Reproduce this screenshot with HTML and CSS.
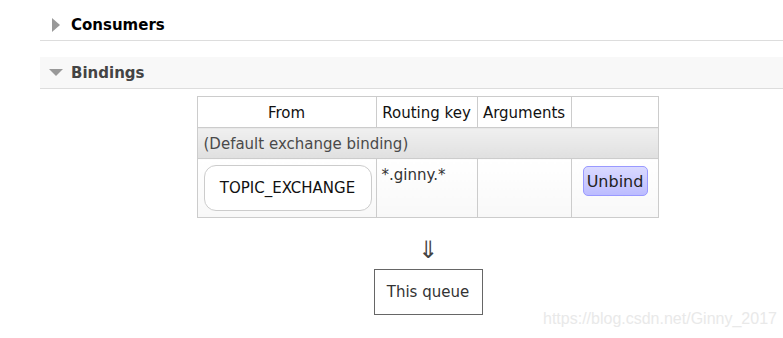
FILE: index.html
```html
<!DOCTYPE html>
<html lang="en">
<head>
    <meta charset="UTF-8">
    <title>Bindings</title>
    <link rel="stylesheet" href="styles.css">
</head>
<body>
    <div class="section">
        <h2 class="section-title collapsed"><span class="arrow"></span>Consumers</h2>
    </div>
    <div class="section">
        <h2 class="section-title open"><span class="arrow"></span>Bindings</h2>
        <div class="bindings">
            <table class="list">
                <thead>
                    <tr>
                        <th class="col-from">From</th>
                        <th class="col-key">Routing key</th>
                        <th class="col-args">Arguments</th>
                        <th class="col-act"></th>
                    </tr>
                </thead>
                <tbody>
                    <tr class="default-row">
                        <td colspan="4">(Default exchange binding)</td>
                    </tr>
                    <tr class="data-row">
                        <td><span class="exchange">TOPIC_EXCHANGE</span></td>
                        <td class="key">*.ginny.*</td>
                        <td></td>
                        <td class="act"><button class="unbind">Unbind</button></td>
                    </tr>
                </tbody>
            </table>
            <div class="down">&#8659;</div>
            <div class="queue">This queue</div>
        </div>
    </div>
    <div class="watermark">https://blog.csdn.net/Ginny_2017</div>
</body>
</html>
```

FILE: styles.css
```css
* {
    box-sizing: border-box;
    margin: 0;
    padding: 0;
}

body {
    font-family: 'DejaVu Sans', Verdana, sans-serif;
    font-size: 15px;
    color: #222;
    background: #fff;
    width: 783px;
    height: 338px;
    overflow: hidden;
    position: relative;
}

.section {
    margin-left: 40px;
}

.section-title {
    font-size: 15px;
    font-weight: bold;
    height: 32px;
    display: flex;
    align-items: center;
    padding-left: 9px;
    border-bottom: 1px solid #ddd;
    color: #000;
}

.section-title.collapsed {
    margin-top: 9px;
    margin-bottom: 16px;
    padding-left: 12px;
}

.section-title.open {
    background: #f8f8f8;
    color: #444;
}

.arrow {
    width: 0;
    height: 0;
}

.collapsed .arrow {
    border-top: 7px solid transparent;
    border-bottom: 7px solid transparent;
    border-left: 8px solid #999;
    margin-right: 11px;
}

.open .arrow {
    border-left: 7px solid transparent;
    border-right: 7px solid transparent;
    border-top: 7px solid #999;
    margin-right: 8px;
}

.bindings {
    display: flex;
    flex-direction: column;
    align-items: center;
    width: 461px;
    margin-left: 157px;
    padding-top: 7px;
}

.list {
    border-collapse: collapse;
    table-layout: fixed;
    width: 461px;
}

.list th,
.list td {
    border: 1px solid #ccc;
}

.list th {
    font-weight: normal;
    height: 31px;
    color: #111;
    padding: 1px 4px 0;
    white-space: nowrap;
}

.col-from { width: 179px; }
.col-key { width: 101px; }
.col-args { width: 94px; }
.col-act { width: 87px; }

.default-row td {
    height: 31px;
    padding: 1px 6px 0;
    color: #4a4a4a;
    background: linear-gradient(#f0f0f0, #e0e0e0);
    white-space: nowrap;
}

.data-row td {
    height: 59px;
    vertical-align: top;
    padding: 6px 5px;
    background: linear-gradient(#fff, #f8f8f8);
}

.data-row td:first-child {
    padding-left: 6px;
}

.data-row td.key {
    padding-top: 7px;
    color: #333;
}

.exchange {
    display: flex;
    align-items: center;
    justify-content: center;
    width: 168px;
    height: 46px;
    border: 1px solid #ccc;
    border-radius: 12px;
    background: #fff;
    color: #111;
    white-space: nowrap;
}

.data-row td.act {
    text-align: center;
}

.unbind {
    font-family: inherit;
    font-size: 16px;
    color: #222;
    width: 65px;
    height: 30px;
    border: 1px solid #99f;
    border-radius: 5px;
    background: linear-gradient(#dadaff, #bcbcff);
    margin-top: 1px;
    margin-left: 1px;
}

.down {
    font-size: 24px;
    line-height: 1;
    color: #444;
    margin-top: 20px;
    height: 31px;
    padding-left: 1px;
}

.queue {
    border: 1px solid #666;
    width: 109px;
    height: 46px;
    display: flex;
    align-items: center;
    justify-content: center;
    color: #333;
    margin-left: 1px;
}

.watermark {
    position: absolute;
    left: 543px;
    top: 310px;
    font-family: 'Liberation Sans', Arial, sans-serif;
    font-size: 16px;
    color: #e9e9e9;
}
```
